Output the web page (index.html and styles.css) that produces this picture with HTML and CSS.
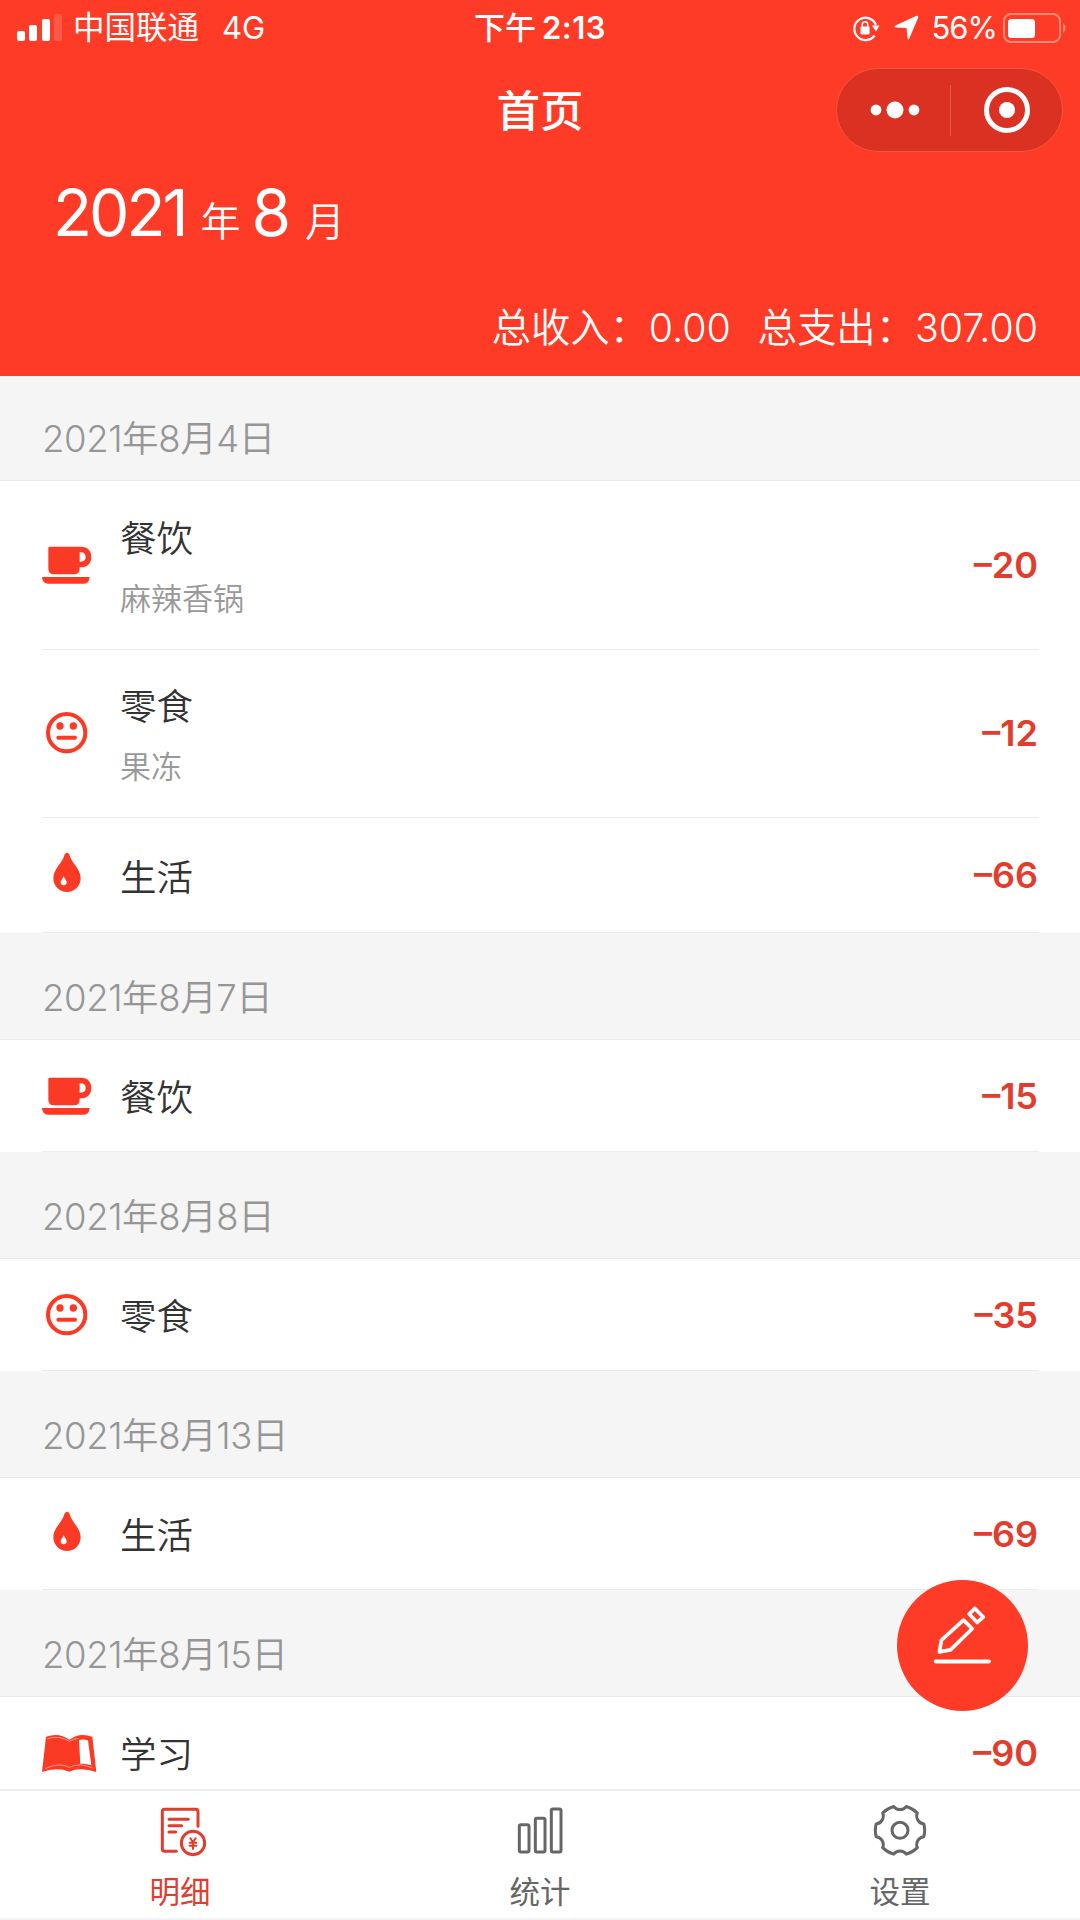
FILE: index.html
```html
<!DOCTYPE html>
<html lang="zh-CN">
<head>
    <meta charset="UTF-8">
    <title>首页</title>
    <link rel="stylesheet" href="styles.css">
</head>
<body>
    <!-- 图标 -->
    <svg class="symbols">
        <symbol id="icon-cup" viewBox="0 -16 162 162">
            <path fill-rule="evenodd" d="M29 10H124C142 10 154 22 154 41S142 72 124 72H119V76Q119 93 102 93H42Q25 93 25 76V14Q25 10 29 10ZM119 27V55H122C132 55 137 50 137 41S132 27 122 27Z"/>
            <path d="M6 101H149Q147 121 132 121H24Q8 121 6 101Z"/>
        </symbol>
        <symbol id="icon-face" viewBox="0 0 162 162">
            <circle cx="80" cy="80" r="56" fill="none" stroke="currentColor" stroke-width="12"/>
            <circle cx="60" cy="60" r="11"/>
            <circle cx="100" cy="60" r="11"/>
            <path d="M55 95H105" stroke="currentColor" stroke-width="12" stroke-linecap="round"/>
        </symbol>
        <symbol id="icon-drop" viewBox="0 0 162 162">
            <path fill-rule="evenodd" d="M74 19Q81 10 88 19C94 46 122 62 122 91A41 41 0 0 1 40 91C40 62 68 46 74 19ZM71 85C75 94 80 97 80 103A9 9 0 0 1 62 103C62 97 67 94 71 85Z"/>
        </symbol>
        <symbol id="icon-book" viewBox="0 0 174 162">
            <path fill-rule="evenodd" d="M18 32Q58 18 88 41Q118 18 157 32L169 138Q120 122 88 137Q50 122 6 138ZM117 42Q130 39 144 43L154 118Q138 112 121 114Z"/>
            <path d="M15 128Q58 108 88 124Q120 108 160 127M22 38Q58 27 88 46Q100 38 116 37" fill="none" stroke="#ffc9b4" stroke-width="2"/>
        </symbol>
    </svg>

    <div class="header">
        <div class="status-bar">
            <div class="status-left">
                <svg class="signal" width="45" height="27" viewBox="0 0 45 27" fill="#fff">
                    <rect x="0" y="17" width="8" height="10" rx="2"/>
                    <rect x="12" y="11" width="8" height="16" rx="2"/>
                    <rect x="25" y="5" width="8" height="22" rx="2"/>
                    <rect x="37" y="0" width="8" height="27" rx="2" opacity=".15"/>
                </svg>
                <span class="carrier">中国联通</span>
                <span class="network">4G</span>
            </div>
            <div class="time">下午<span class="clock">2:13</span></div>
            <div class="status-right">
                <svg width="28" height="28" viewBox="0 0 28 28">
                    <path d="M22.6 21.5A11.2 11.2 0 1 1 24 11" fill="none" stroke="#fff" stroke-width="2.2"/>
                    <path d="M20 11.500H27.500L24 17.500Z" fill="#fff"/>
                    <rect x="8.500" y="12.500" width="9" height="8" rx="1" fill="#fff"/>
                    <path d="M10.300 13V10.500A2.700 2.700 0 0 1 15.700 10.500V13" fill="none" stroke="#fff" stroke-width="1.500"/>
                </svg>
                <svg class="location" width="25" height="25" viewBox="0 0 25 25">
                    <path d="M1.500 10.500L22 1Q25 0 24 3L15.500 23Q14 26 13.500 22.500L12.500 13L2 12.500Q-1 12 1.500 10.500Z" fill="#fff"/>
                </svg>
                <span class="percent">56%</span>
                <svg class="battery" width="66" height="30" viewBox="0 0 66 30">
                    <rect x="1" y="1" width="56" height="28" rx="7" fill="none" stroke="#ff8a74" stroke-width="2"/>
                    <rect x="5" y="6" width="27" height="19" rx="3.500" fill="#fff"/>
                    <path d="M60 10Q65 15 60 20Z" fill="#ff8a74"/>
                </svg>
            </div>
        </div>

        <div class="nav-bar">
            <div class="nav-title">首页</div>
            <div class="capsule">
                <svg width="50" height="18" viewBox="0 0 50 18" fill="#fff">
                    <circle cx="6" cy="9" r="5.400"/>
                    <circle cx="25" cy="9" r="8.500"/>
                    <circle cx="44" cy="9" r="5.400"/>
                </svg>
                <span class="capsule-line"></span>
                <svg width="46" height="46" viewBox="0 0 46 46">
                    <circle cx="23" cy="23" r="20.500" fill="none" stroke="#fff" stroke-width="5"/>
                    <circle cx="23" cy="23" r="8" fill="#fff"/>
                </svg>
            </div>
        </div>

        <div class="month"><span class="year-num">2021</span><span class="unit">年</span><span class="month-num">8</span><span class="unit">月</span></div>
        <div class="total">
            <span>总收入：0.00</span>
            <span>总支出：307.00</span>
        </div>
    </div>

    <div class="list">
        <div class="date first">2021年8月4日</div>
        <div class="group">
            <div class="item has-note">
                <svg class="icon"><use href="#icon-cup"/></svg>
                <div class="info">
                    <div class="name">餐饮</div>
                    <div class="note">麻辣香锅</div>
                </div>
                <div class="money">–20</div>
            </div>
            <div class="item has-note">
                <svg class="icon"><use href="#icon-face"/></svg>
                <div class="info">
                    <div class="name">零食</div>
                    <div class="note">果冻</div>
                </div>
                <div class="money">–12</div>
            </div>
            <div class="item">
                <svg class="icon"><use href="#icon-drop"/></svg>
                <div class="info"><div class="name">生活</div></div>
                <div class="money">–66</div>
            </div>
        </div>

        <div class="date">2021年8月7日</div>
        <div class="group">
            <div class="item">
                <svg class="icon"><use href="#icon-cup"/></svg>
                <div class="info"><div class="name">餐饮</div></div>
                <div class="money">–15</div>
            </div>
        </div>

        <div class="date">2021年8月8日</div>
        <div class="group">
            <div class="item">
                <svg class="icon"><use href="#icon-face"/></svg>
                <div class="info"><div class="name">零食</div></div>
                <div class="money">–35</div>
            </div>
        </div>

        <div class="date">2021年8月13日</div>
        <div class="group">
            <div class="item">
                <svg class="icon"><use href="#icon-drop"/></svg>
                <div class="info"><div class="name">生活</div></div>
                <div class="money">–69</div>
            </div>
        </div>

        <div class="date">2021年8月15日</div>
        <div class="group">
            <div class="item">
                <svg class="icon wide"><use href="#icon-book"/></svg>
                <div class="info"><div class="name">学习</div></div>
                <div class="money">–90</div>
            </div>
        </div>
    </div>

    <!-- 记一笔 -->
    <div class="add-btn">
        <svg width="131" height="131" viewBox="0 0 392 392" fill="none" stroke="#fff" stroke-width="11" stroke-linejoin="round" stroke-linecap="round">
            <path d="M199 120L225 146L160 209L127 215L133 180Z"/>
            <path d="M233 85L258 111L240 127L216 102Z"/>
            <path d="M116 244H275" stroke-width="12"/>
        </svg>
    </div>

    <div class="tab-bar">
        <div class="tab active">
            <svg class="tab-icon" viewBox="0 0 162 162">
                <path d="M70 139H35Q28 139 28 132V20Q28 13 35 13H128Q135 13 135 20V64M48 43H106M48 62H86M48 81H68"/>
                <circle cx="120" cy="114" r="35"/>
                <path d="M112 100L120 111L128 100M120 111V132M110 113H130M110 122H130" stroke-width="6"/>
            </svg>
            <span>明细</span>
        </div>
        <div class="tab">
            <svg class="tab-icon" viewBox="0 0 162 162">
                <rect x="19" y="59" width="29" height="82" rx="5"/>
                <rect x="67" y="40" width="29" height="101" rx="5"/>
                <rect x="115" y="12" width="29" height="129" rx="5"/>
            </svg>
            <span>统计</span>
        </div>
        <div class="tab">
            <svg class="tab-icon" viewBox="0 0 162 162">
                <path d="M62 4.500A24 24 0 0 0 100 4.500A74 74 0 0 1 133 24A24 24 0 0 0 152.500 57A74 74 0 0 1 152.500 95A24 24 0 0 0 133 128A74 74 0 0 1 100 147.500A24 24 0 0 0 62 147.500A74 74 0 0 1 29 128A24 24 0 0 0 9.500 95A74 74 0 0 1 9.500 57A24 24 0 0 0 29 24A74 74 0 0 1 62 4.500Z"/>
                <circle cx="81" cy="76" r="24"/>
            </svg>
            <span>设置</span>
        </div>
    </div>
</body>
</html>
```
FILE: styles.css
```css
* {
    box-sizing: border-box;
}

body {
    margin: 0;
    height: 1920px;
    overflow: hidden;
    background-color: #f5f5f5;
    font-family: Inter, "Noto Sans CJK SC", sans-serif;
    color: #333;
}

svg {
    display: block;
    flex: none;
}

.symbols {
    position: absolute;
    width: 0;
    height: 0;
}

/* 顶部 */
.header {
    height: 376px;
    background-color: #fe3b26;
    color: #fff;
}

.status-bar {
    display: grid;
    grid-template-columns: 1fr auto 1fr;
    align-items: center;
    height: 55px;
    padding: 0 14px 0 17px;
    font-size: 31.5px;
    line-height: 55px;
}

.status-left,
.status-right {
    display: flex;
    align-items: center;
}

.status-right {
    justify-content: flex-end;
    margin-right: -3px;
}

.signal {
    margin-right: 11px;
}

.network {
    margin-left: 23px;
    font-size: 31px;
}

.time {
    margin-right: 3px;
    font-size: 31px;
    font-weight: 500;
}

.clock {
    margin-left: 6px;
    font-weight: 600;
    letter-spacing: 0.5px;
}

.location {
    margin: 0 12px 0 14px;
}

.percent {
    font-size: 31px;
    letter-spacing: -1px;
}

.battery {
    margin-left: 6px;
}

.nav-bar {
    display: grid;
    grid-template-columns: 1fr auto 1fr;
    align-items: center;
    height: 84px;
    margin-top: 13px;
}

.nav-title {
    grid-column: 2;
    padding-bottom: 4px;
    font-size: 43.5px;
    font-weight: 500;
}

.capsule {
    display: flex;
    justify-content: space-between;
    align-items: center;
    justify-self: end;
    width: 227px;
    height: 84px;
    margin-right: 17px;
    padding: 0 32px 0 33px;
    border: 1px solid #f25440;
    border-radius: 42px;
    background-color: #da3122;
}

.capsule-line {
    width: 1px;
    height: 51px;
    margin-right: 4px;
    background-color: #e75a4c;
}

.month {
    display: flex;
    align-items: baseline;
    padding-left: 53px;
    margin-top: 22px;
    line-height: 78px;
}

.year-num,
.month-num {
    font-size: 64px;
    letter-spacing: -3px;
}

.unit {
    margin-left: 15px;
    font-size: 40px;
    font-weight: 350;
}

.month-num {
    margin-left: 11px;
}

.month-num + .unit {
    margin-left: 17px;
}

.total {
    display: flex;
    justify-content: flex-end;
    gap: 27px;
    margin-top: 38px;
    padding-right: 42px;
    font-size: 39.3px;
    font-weight: 350;
    line-height: 58px;
}

/* 列表 */
.date {
    height: 106px;
    padding: 17px 42px 0;
    color: #969696;
    font-size: 36.5px;
    font-weight: 350;
    letter-spacing: -0.4px;
    line-height: 96px;
}

.date.first {
    height: 104px;
    padding-top: 15px;
}

.group {
    padding-left: 42px;
    border-top: 1px solid #ebebeb;
    background-color: #fff;
}

.item {
    display: flex;
    align-items: center;
    height: 112px;
    margin-right: 41px;
    border-bottom: 1px solid #ececec;
}

.item.has-note {
    height: 168.5px;
}

.item.has-note + .item:last-child {
    height: 115px;
}

.icon {
    width: 54px;
    height: 54px;
    margin-left: -2px;
    margin-right: 26px;
    color: #fb3a25;
    fill: currentColor;
}

.icon.wide {
    width: 58px;
    margin-right: 22px;
}

.info {
    flex: 1;
    padding-top: 5px;
}

.name {
    font-size: 36.5px;
    font-weight: 350;
    line-height: 54px;
}

.note {
    margin-top: 9px;
    color: #999;
    font-size: 31px;
    font-weight: 350;
    line-height: 48px;
}

.money {
    padding-right: 1px;
    color: #e23c2e;
    font-size: 36px;
    font-weight: 600;
}

.add-btn {
    position: fixed;
    right: 52px;
    bottom: 209px;
    width: 131px;
    height: 131px;
    border-radius: 50%;
    background-color: #fe3b26;
}

/* 底部导航 */
.tab-bar {
    position: fixed;
    left: 0;
    right: 0;
    bottom: 0;
    display: flex;
    height: 131px;
    border-top: 2px solid #eee;
    border-bottom: 2px solid #f3f3f3;
    background-color: #fff;
}

.tab {
    display: flex;
    flex: 1;
    flex-direction: column;
    align-items: center;
    padding-top: 14px;
    color: #666;
    font-size: 30.5px;
    line-height: 44px;
}

.tab.active {
    color: #e23c2e;
}

.tab-icon {
    width: 54px;
    height: 54px;
    margin-bottom: 11px;
    fill: none;
    stroke: currentColor;
    stroke-width: 9;
    stroke-linecap: round;
    stroke-linejoin: round;
}
```
